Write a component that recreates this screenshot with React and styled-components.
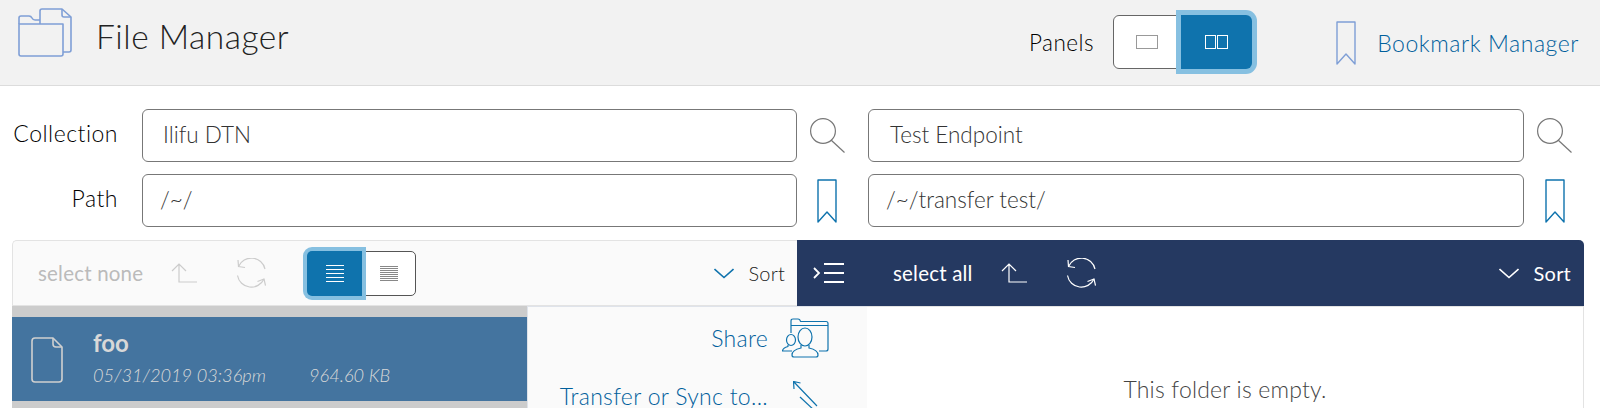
import React from "react"
import styled, { createGlobalStyle } from "styled-components"

const GlobalStyle = createGlobalStyle`
  html, body {
    margin: 0;
    height: 408px;
    overflow: hidden;
    background: #fff;
  }
  body {
    font-family: Lato, "Open Sans", sans-serif;
    color: #222;
  }
  * { box-sizing: border-box; }
`

const BLUE = "#0f73ad"
const LINK = "#00609c"
const RING = "#86c0e1"
const NAVY = "#253961"

const Header = styled.header`
  display: flex;
  align-items: center;
  height: 86px;
  padding: 0 21px 0 18px;
  background: #f2f2f2;
  border-bottom: 1px solid #dcdcdc;
`
const Logo = styled.div`
  display: flex;
  margin-bottom: 20px;
`
const Title = styled.h1`
  flex: 1;
  margin: 0 0 14px 23px;
  font-size: 33.5px;
  font-weight: 300;
  color: #222;
  letter-spacing: 0.5px;
`
const PanelsLabel = styled.span`
  margin-right: 19px;
  font-size: 22.5px;
  font-weight: 300;
  letter-spacing: 0.5px;
  color: #000;
`
const Toggle = styled.div`
  display: flex;
  height: 54px;
  margin-bottom: 2px;
`
const ToggleBtn = styled.div`
  position: relative;
  z-index: ${(p) => (p.$active ? 1 : 0)};
  display: flex;
  align-items: center;
  justify-content: center;
  width: ${(p) => (p.$active ? 71 : 68)}px;
  background: ${(p) => (p.$active ? BLUE : "#fff")};
  border: ${(p) => (p.$active ? "none" : "1px solid #666")};
  border-radius: ${(p) => (p.$active ? "0 6px 6px 0" : "6px 0 0 6px")};
  box-shadow: ${(p) => (p.$active ? `0 0 0 5px ${RING}` : "none")};
`
const BookmarkLink = styled.a`
  display: flex;
  align-items: center;
  gap: 21px;
  margin-left: 84px;
  font-size: 23px;
  font-weight: 300;
  color: ${LINK};
  letter-spacing: 0.55px;
`

const Form = styled.div`
  display: grid;
  grid-template-columns: 142px 655px 71px 656px 1fr;
  grid-auto-rows: 53px;
  row-gap: 12px;
  align-items: center;
  padding-top: 23px;
`
const FieldLabel = styled.label`
  padding: 0 24px 5px 0;
  text-align: right;
  font-size: 23px;
  font-weight: 300;
  letter-spacing: 0.5px;
  color: #000;
`
const Field = styled.div`
  display: flex;
  align-items: center;
  height: 53px;
  padding: 0 0 3px ${(p) => p.$pad}px;
  border: 1px solid #777;
  border-radius: 6px;
  font-size: 22.5px;
  font-weight: 300;
  color: #333;
`
const IconCell = styled.div`
  display: flex;
  padding-left: ${(p) => p.$pad}px;
`

const Toolbars = styled.div`
  display: flex;
  height: 66px;
  margin: 13px 16px 0 12px;
`
const LeftBar = styled.div`
  display: flex;
  align-items: center;
  width: 785px;
  padding: 0 12px 0 25px;
  background: #fafafa;
  border: 1px solid #e3e3e3;
  border-right: none;
  border-radius: 5px 0 0 0;
`
const RightBar = styled.div`
  flex: 1;
  display: flex;
  align-items: center;
  padding: 0 13px 0 16px;
  background: ${NAVY};
  color: #fff;
  border-radius: 0 5px 0 0;
`
const BarText = styled.span`
  margin-left: ${(p) => p.$ml || 0}px;
  font-size: 20.5px;
  letter-spacing: 0.2px;
  color: ${(p) => p.$color || "inherit"};
`
const SortLabel = styled.span`
  font-size: 20px;
  font-weight: ${(p) => p.$weight};
  letter-spacing: 0.2px;
`
const BarIcon = styled.div`
  display: flex;
  margin-left: ${(p) => p.$ml}px;
`
const ViewToggle = styled.div`
  display: flex;
  height: 45px;
  margin-left: 41px;
`
const ViewBtn = styled.div`
  position: relative;
  z-index: ${(p) => (p.$active ? 1 : 0)};
  display: flex;
  align-items: center;
  justify-content: center;
  width: ${(p) => (p.$active ? 55 : 54)}px;
  background: ${(p) => (p.$active ? BLUE : "#fff")};
  border: ${(p) => (p.$active ? "none" : "1px solid #555")};
  border-radius: ${(p) => (p.$active ? "5px 0 0 5px" : "0 5px 5px 0")};
  box-shadow: ${(p) => (p.$active ? `0 0 0 4px ${RING}` : "none")};
`
const SortGroup = styled.div`
  display: flex;
  align-items: center;
  gap: 15px;
  margin-left: auto;
`

const Panels = styled.div`
  display: flex;
  height: 102px;
  margin: 0 16px 0 12px;
`
const ListCol = styled.div`
  width: 515px;
  padding-top: 11px;
  background: #ccc;
`
const FileRow = styled.div`
  display: flex;
  height: 84px;
  padding: 20px 0 0 19px;
  background: #44749f;
  color: #d8d8d8;
`
const FileInfo = styled.div`
  margin-left: 30px;
`
const FileName = styled.div`
  margin-top: -7px;
  font-size: 24px;
  font-weight: 700;
  line-height: 26px;
`
const FileMeta = styled.div`
  display: flex;
  gap: 43px;
  margin-top: 8px;
  font-size: 18.2px;
  font-style: italic;
  font-weight: 300;
  line-height: 22px;
`
const ActionsCol = styled.div`
  width: 340px;
  padding-top: 11px;
  background: #fafafa;
  border-top: 1px solid #dfe3ea;
  border-left: 1px solid #dfe3ea;
`
const ActionRow = styled.div`
  display: flex;
  align-items: center;
  justify-content: flex-end;
  height: 40px;
  margin-bottom: 18px;
  font-size: 23px;
  font-weight: 300;
  letter-spacing: 0.3px;
  white-space: nowrap;
  color: ${LINK};
`
const ActionIcon = styled.div`
  display: flex;
  width: 99px;
  padding-left: ${(p) => p.$pad}px;
`
const EmptyCol = styled.div`
  flex: 1;
  padding-top: 68px;
  border-top: 1px solid #e3e3e3;
  border-right: 1px solid #e3e3e3;
  text-align: center;
  font-size: 23px;
  font-weight: 300;
  letter-spacing: 0.2px;
  color: #444;
`

const Search = () => (
  <svg width="35" height="35" viewBox="0 0 35 35" fill="none" stroke="#777" strokeWidth="1.2">
    <circle cx="13" cy="13" r="12.4" />
    <path d="M21 22L34.5 34.5" />
  </svg>
)

const Bookmark = ({ color = BLUE }) => (
  <svg width="20" height="44" viewBox="0 0 20 44" fill="none" stroke={color} strokeWidth="1.4" strokeLinejoin="round">
    <path d="M1 1H19V43L10 33L1 43Z" />
  </svg>
)

const FolderLogo = () => (
  <svg width="55" height="49" viewBox="0 0 55 49" fill="none" stroke="#7f9fd6" strokeWidth="1.6" strokeLinejoin="round">
    <path d="M22 16V3Q22 1 24 1H44L53 9V42Q53 44 51 44H45" />
    <path d="M44 1V7Q44 9 46 9H53" />
    <path d="M1 16V10Q1 8 3 8H11Q13 8 14 10Q15 12 17 12H22" />
    <path d="M1 16H45V46Q45 48 43 48H3Q1 48 1 46Z" />
  </svg>
)

const UpArrow = ({ color }) => (
  <svg width="26" height="20" viewBox="0 0 26 20" fill="none" stroke={color} strokeWidth="1.2">
    <path d="M1 8L8 1L15 8M8 1V19H26" />
  </svg>
)

const Refresh = ({ color }) => (
  <svg width="30" height="30" viewBox="0 0 30 30" fill="none" stroke={color} strokeWidth="1.2">
    <path d="M29 11A14 14 0 0 0 2.5 8.5" />
    <path d="M2 2L2.5 8.5L9 9.5" />
    <path d="M1.5 17.5A14 14 0 0 0 28 21" />
    <path d="M29.5 27.5L28 21L21.5 23.5" />
  </svg>
)

const Chevron = ({ color }) => (
  <svg width="20" height="11" viewBox="0 0 20 11" fill="none" stroke={color} strokeWidth="1.6">
    <path d="M0.5 1L10 9.5L19.5 1" />
  </svg>
)

const Lines = ({ color, n, gap }) => (
  <svg width="18" height={(n - 1) * gap + 1} fill="none" stroke={color} strokeWidth="1">
    {Array.from({ length: n }).map((_, i) => (
      <path key={i} d={`M0 ${i * gap + 0.5}H18`} />
    ))}
  </svg>
)

const SinglePanel = () => (
  <svg width="22" height="14" fill="none" stroke="#999" strokeWidth="1">
    <rect x="0.5" y="0.5" width="21" height="13" />
  </svg>
)

const DoublePanel = () => (
  <svg width="23" height="14" fill="none" stroke="#fff" strokeWidth="1">
    <rect x="0.5" y="0.5" width="10" height="13" />
    <rect x="12.5" y="0.5" width="10" height="13" />
  </svg>
)

const CollapseIcon = () => (
  <svg width="31" height="20" fill="none" stroke="#fff" strokeWidth="2">
    <path d="M1 5L6 10L1 15" strokeWidth="1.8" />
    <path d="M11 1H31M11 10H31M11 19H31" />
  </svg>
)

const FileIcon = () => (
  <svg width="32" height="46" viewBox="0 0 32 46" fill="none" stroke="#d0d0d0" strokeWidth="1.6" strokeLinejoin="round">
    <path d="M22 1H4Q1 1 1 4V42Q1 45 4 45H28Q31 45 31 42V10Z" />
    <path d="M22 1V7Q22 10 25 10H31" />
  </svg>
)

const ShareIcon = () => (
  <svg width="47" height="40" viewBox="0 0 47 40" fill="none" stroke={BLUE} strokeWidth="1.2" strokeLinejoin="round">
    <path d="M9 15V3Q9 1 11 1H16Q18 1 18.5 3.5H44Q46 3.5 46 5.5V31Q46 33 44 33H37" />
    <path d="M9 7.5H46" />
    <ellipse cx="23" cy="19" rx="7" ry="9" />
    <path d="M19 27V30Q10 32 10 37Q10 39 12 39H34Q36 39 36 37Q36 32 27 30V27" />
    <ellipse cx="9" cy="22" rx="4.5" ry="5.5" />
    <path d="M6 27V28.5Q0.5 30 0.5 33H10" />
  </svg>
)

const TransferIcon = () => (
  <svg width="25" height="30" viewBox="0 0 25 30" fill="none" stroke={BLUE} strokeWidth="1.2">
    <path d="M7.5 2L0.5 0.5L1 8M0.5 0.5L24 25" />
    <path d="M7 16L22 30" />
  </svg>
)

const App = () => (
  <>
    <GlobalStyle />
    <Header>
      <Logo>
        <FolderLogo />
      </Logo>
      <Title>File Manager</Title>
      <PanelsLabel>Panels</PanelsLabel>
      <Toggle>
        <ToggleBtn>
          <SinglePanel />
        </ToggleBtn>
        <ToggleBtn $active>
          <DoublePanel />
        </ToggleBtn>
      </Toggle>
      <BookmarkLink>
        <Bookmark color="#7f9fd6" />
        Bookmark Manager
      </BookmarkLink>
    </Header>

    <Form>
      <FieldLabel>Collection</FieldLabel>
      <Field $pad={20}>Ilifu DTN</Field>
      <IconCell $pad={13}><Search /></IconCell>
      <Field $pad={21}>Test Endpoint</Field>
      <IconCell $pad={13}><Search /></IconCell>

      <FieldLabel>Path</FieldLabel>
      <Field $pad={17}>/~/</Field>
      <IconCell $pad={20}><Bookmark /></IconCell>
      <Field $pad={17}>/~/transfer test/</Field>
      <IconCell $pad={21}><Bookmark /></IconCell>
    </Form>

    <Toolbars>
      <LeftBar>
        <BarText $color="#bbb">select none</BarText>
        <BarIcon $ml={28}><UpArrow color="#ccc" /></BarIcon>
        <BarIcon $ml={39}><Refresh color="#ccc" /></BarIcon>
        <ViewToggle>
          <ViewBtn $active>
            <Lines color="#fff" n={5} gap={4} />
          </ViewBtn>
          <ViewBtn>
            <Lines color="#888" n={8} gap={2} />
          </ViewBtn>
        </ViewToggle>
        <SortGroup>
          <Chevron color={BLUE} />
          <SortLabel $weight={300}>Sort</SortLabel>
        </SortGroup>
      </LeftBar>
      <RightBar>
        <CollapseIcon />
        <BarText $ml={49}>select all</BarText>
        <BarIcon $ml={28}><UpArrow color="#fff" /></BarIcon>
        <BarIcon $ml={39}><Refresh color="#fff" /></BarIcon>
        <SortGroup>
          <Chevron color="#fff" />
          <SortLabel $weight={400}>Sort</SortLabel>
        </SortGroup>
      </RightBar>
    </Toolbars>

    <Panels>
      <ListCol>
        <FileRow>
          <FileIcon />
          <FileInfo>
            <FileName>foo</FileName>
            <FileMeta>
              <span>05/31/2019 03:36pm</span>
              <span>964.60 KB</span>
            </FileMeta>
          </FileInfo>
        </FileRow>
      </ListCol>
      <ActionsCol>
        <ActionRow>
          Share
          <ActionIcon $pad={14}><ShareIcon /></ActionIcon>
        </ActionRow>
        <ActionRow>
          Transfer or Sync to...
          <ActionIcon $pad={25}><TransferIcon /></ActionIcon>
        </ActionRow>
      </ActionsCol>
      <EmptyCol>This folder is empty.</EmptyCol>
    </Panels>
  </>
)

export default App
